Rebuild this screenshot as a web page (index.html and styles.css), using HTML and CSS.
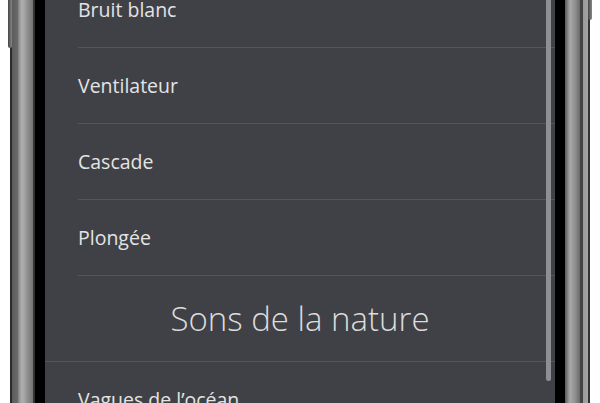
FILE: index.html
```html
<!DOCTYPE html>
<html>
<head>
<meta charset="utf-8">
<link rel="stylesheet" href="styles.css">
</head>
<body>
<div class="phone">
  <div class="bezel-left"><span class="side-button left-button"></span></div>
  <div class="screen">
    <ul class="sound-list">
      <li class="sound-row">Bruit blanc</li>
      <li class="sound-row">Ventilateur</li>
      <li class="sound-row">Cascade</li>
      <li class="sound-row">Plongée</li>
      <li class="section-title">Sons de la nature</li>
      <li class="sound-row">Vagues de l’océan</li>
    </ul>
    <div class="scrollbar"></div>
  </div>
  <div class="bezel-right"><span class="side-button right-button"></span></div>
</div>
</body>
</html>
```

FILE: styles.css
```css
html, body { margin: 0; padding: 0; background-color: white; height: 403px; overflow: hidden; }
.phone { display: flex; margin-left: 10px; width: 580px; height: 403px; }
.bezel-left { position: relative; width: 35px; background: linear-gradient(to right, #2c2c2c 0, #2c2c2c 2px, #5c5c5c 2px, #6a6a6a 8px, #7c7c7c 8px, #9c9c9c 10px, #b0b0b0 12px, #a0a0a0 15px, #8c8c8c 18px, #747474 23px, #333 23px, #333 25px, #000 25px); }
.bezel-right { position: relative; width: 35px; background: linear-gradient(to right, #000 0, #000 10px, #5a5a5a 10px, #a8a8a8 15px, #909090 20px, #6a6a6a 25px, #444 25px, #444 28px, #9a9a9a 28px, #a4a4a4 33px, #333 33px); }
.side-button { position: absolute; top: 0; width: 4px; background: linear-gradient(to right, #444, #888); border-radius: 0 0 2px 2px; }
.left-button { left: -2px; height: 48px; }
.right-button { right: -2px; height: 20px; }
.screen { position: relative; flex: 1; background-color: #404146; overflow: hidden; font-family: "Open Sans", sans-serif; color: #e4e4e4; }
.sound-list { list-style: none; margin: -28px 0 0 0; padding: 0; }
.sound-row { display: flex; align-items: center; height: 75px; margin-left: 33px; border-bottom: 1px solid #55565b; font-size: 19.5px; }
.section-title { display: flex; align-items: center; justify-content: center; height: 85px; border-bottom: 1px solid #55565b; font-size: 33px; font-weight: 300; color: #dcdcdc; }
.scrollbar { position: absolute; top: -10px; right: 4px; width: 5px; height: 391px; border-radius: 3px; background-color: #8e8f93; }
```
